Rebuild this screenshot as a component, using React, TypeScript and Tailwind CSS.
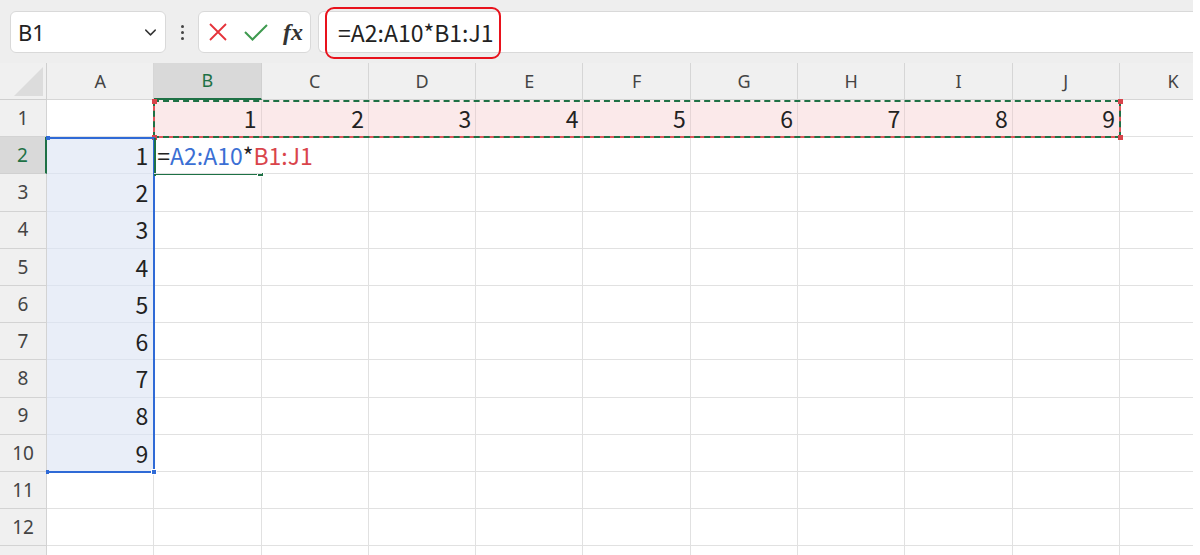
import { ChevronDown } from "lucide-react";

const cols = ["A", "B", "C", "D", "E", "F", "G", "H", "I", "J", "K"];
const rows = Array.from({ length: 13 }, (_, i) => i + 1);

const cellFont = { fontFamily: '"Noto Sans CJK JP", "Noto Sans", sans-serif' };

function CornerCell() {
  return (
    <div className="relative border-b border-r border-[#cfcfcf] bg-[#f0f0f0]">
      <svg className="absolute bottom-[3px] right-[3px]" width="29" height="29" viewBox="0 0 29 29">
        <polygon points="29,0 29,29 0,29" fill="#dcdcdc" />
      </svg>
    </div>
  );
}

function ColHeader({ label, active }: { label: string; active: boolean }) {
  return (
    <div
      className={
        active
          ? "flex items-center justify-center border-b-2 border-r border-b-[#1e7145] border-r-[#d0d0d0] bg-[#d9d9d9] text-[18px] text-[#1e7145]"
          : "flex items-center justify-center border-b border-r border-[#d6d6d6] bg-[#f0f0f0] text-[18px] text-[#444]"
      }
    >
      {label}
    </div>
  );
}

function RowHeader({ n, active }: { n: number; active: boolean }) {
  return (
    <div
      className={
        active
          ? "flex items-center justify-center border-b border-r-2 border-b-[#d0d0d0] border-r-[#1e7145] bg-[#d9d9d9] text-[19px] text-[#1e7145]"
          : "flex items-center justify-center border-b border-r border-[#d3d3d3] bg-[#f0f0f0] text-[19px] text-[#444]"
      }
    >
      {n <= 12 ? n : null}
    </div>
  );
}

function DataCell({ r, c }: { r: number; c: number }) {
  const inRow = r === 1 && c >= 1 && c <= 9;
  const inCol = c === 0 && r >= 2 && r <= 10;
  const value = inRow ? c : inCol ? r - 1 : null;
  const editing = r === 2 && c === 1;
  if (editing) {
    return (
      <div className="relative z-10 flex items-center whitespace-nowrap border-b border-[#e1e1e1] pl-[3px] text-[23px] text-[#222]" style={cellFont}>
        <span>=</span>
        <span className="text-[#3b6fd4]">A2:A10</span>
        <span>*</span>
        <span className="text-[#d9444b]">B1:J1</span>
      </div>
    );
  }
  return (
    <div
      className={
        inRow
          ? "flex items-center justify-end border-b border-r border-[#e6d5d6] bg-[#fbe9ea] pr-[4px] text-[23px] text-[#222]"
          : inCol
            ? "flex items-center justify-end border-b border-r border-[#dde3ee] bg-[#e9eef8] pr-[5px] text-[23px] text-[#222]"
            : "border-b border-r border-[#e1e1e1]"
      }
      style={cellFont}
    >
      {value}
    </div>
  );
}

function FormulaBar() {
  return (
    <div className="flex h-[63px] shrink-0 items-start bg-[#eeeeee] pl-[10px] pt-[11px]">
      <div className="flex h-[42px] w-[156px] items-center justify-between rounded-[6px] border border-[#d9d9d9] bg-white pl-[7px] pr-[5px]">
        <span className="text-[22px] text-[#222]" style={{ fontFamily: '"Noto Sans", sans-serif' }}>B1</span>
        <ChevronDown size={19} strokeWidth={1.8} className="text-[#333]" />
      </div>
      <div className="flex h-[42px] w-[32px] flex-col items-center justify-center gap-[3px]">
        <span className="h-[3px] w-[3px] rounded-full bg-[#444]" />
        <span className="h-[3px] w-[3px] rounded-full bg-[#444]" />
        <span className="h-[3px] w-[3px] rounded-full bg-[#444]" />
      </div>
      <div className="flex h-[42px] w-[113px] items-center gap-[14px] rounded-[6px] border border-[#d9d9d9] bg-white pl-[8px]">
        <svg width="22" height="22" viewBox="0 0 22 22">
          <path d="M3 3 L19 19 M19 3 L3 19" stroke="#e5323a" strokeWidth="1.8" fill="none" />
        </svg>
        <svg width="26" height="22" viewBox="0 0 26 22">
          <path d="M2 11 L9.5 18.5 L24 4" stroke="#3e9a4f" strokeWidth="2" fill="none" />
        </svg>
        <span className="text-[24px] font-bold italic leading-none text-[#333]" style={{ fontFamily: '"Liberation Serif", serif' }}>fx</span>
      </div>
      <div className="relative ml-[7px] h-[42px] flex-1 rounded-l-[6px] border border-r-0 border-[#d9d9d9] bg-white">
        <div className="flex h-full items-center pl-[19px] text-[23px] text-[#222]" style={cellFont}>
          =A2:A10*B1:J1
        </div>
        <div className="absolute left-[6px] top-[-5px] h-[52px] w-[176px] rounded-[9px] border-2 border-[#e8121c]" />
      </div>
    </div>
  );
}

export default function App() {
  return (
    <div className="flex h-[555px] w-[1200px] overflow-hidden bg-white" style={{ fontFamily: '"Noto Sans", "Noto Sans CJK JP", sans-serif' }}>
      <div className="flex w-[1193px] shrink-0 flex-col overflow-hidden">
        <FormulaBar />
        <div className="relative grid shrink-0 grid-cols-[47px_repeat(11,107.3px)] grid-rows-[37px_repeat(13,37.2px)]">
          <CornerCell />
          {cols.map((c, i) => (
            <ColHeader key={c} label={c} active={i === 1} />
          ))}
          {rows.map((r) => (
            <div key={r} className="contents">
              <RowHeader n={r} active={r === 2} />
              {cols.map((c, i) => (
                <DataCell key={c} r={r} c={i} />
              ))}
            </div>
          ))}

          {/* B1:J1 reference + copy marquee */}
          <div className="pointer-events-none absolute left-[153px] top-[37px] h-[38px] w-[968px] border-x-2 border-b-2 border-[#e0555b]" />
          <div className="pointer-events-none absolute left-[153px] top-[37px] h-[38px] w-[968px] border-2 border-dashed border-[#1e7145]" />
          <div className="absolute left-[152px] top-[36px] h-[5px] w-[5px] bg-[#d9444b]" />
          <div className="absolute left-[152px] top-[72px] h-[5px] w-[5px] bg-[#d9444b]" />
          <div className="absolute left-[1118px] top-[36px] h-[5px] w-[5px] bg-[#d9444b]" />
          <div className="absolute left-[1118px] top-[72px] h-[5px] w-[5px] bg-[#d9444b]" />

          {/* A2:A10 reference */}
          <div className="pointer-events-none absolute left-[46px] top-[74px] h-[336px] w-[109px] border-y-2 border-r-2 border-[#2f6ad6]" />
          <div className="absolute left-[46px] top-[73px] h-[4px] w-[4px] bg-[#2f6ad6]" />
          <div className="absolute left-[46px] top-[407px] h-[4px] w-[3px] bg-[#2f6ad6]" />
          <div className="absolute left-[151px] top-[406px] h-[6px] w-[6px] border border-white bg-[#2f6ad6]" />

          {/* active cell B2 */}
          <div className="pointer-events-none absolute left-[154px] top-[75px] h-[38px] w-[2px] bg-[#1e7145]" />
          <div className="pointer-events-none absolute left-[154px] top-[110px] h-[2px] w-[108px] bg-[#1e7145]" />
          <div className="absolute left-[257px] top-[109px] h-[5px] w-[7px] border border-white bg-[#1e7145]" />
        </div>
      </div>
    </div>
  );
}
